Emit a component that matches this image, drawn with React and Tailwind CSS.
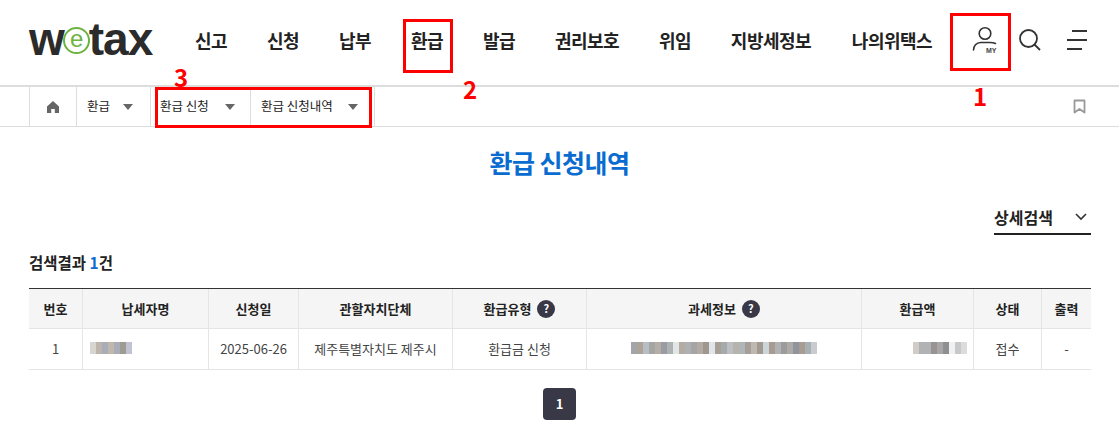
const menus = [
  { label: "신고", className: "w-[72px]" },
  { label: "신청", className: "w-[72px]" },
  { label: "납부", className: "w-[72px]" },
  { label: "환급", className: "w-[72px]" },
  { label: "발급", className: "w-[72px]" },
  { label: "권리보호", className: "w-[104px]" },
  { label: "위임", className: "w-[72px]" },
  { label: "지방세정보", className: "w-[120px]" },
  { label: "나의위택스", className: "w-[122px]" },
];

const gridCols = "grid-cols-[54px_126px_90px_154px_134px_275px_112px_68px_49px]";

// blurred personal data in the screenshot, one class per block
const nameCells = ["bg-[#d8d4d0]", "bg-[#bdb5ad]", "bg-[#a9adb8]", "bg-[#c0b7ad]", "bg-[#a9adb8]", "bg-[#9e9c92]", "bg-[#c1c4d0]"];
const infoCells = [
  "bg-[#a3a5a6]", "bg-[#ada39b]", "bg-[#b7bfc4]", "bg-[#a5a5a1]", "bg-[#b5aea8]", "bg-[#999ca3]", "bg-[#aeb2b2]", "bg-[#e3e6e6]",
  "bg-[#b5aba5]", "bg-[#afb0b2]", "bg-[#a5a5a5]", "bg-[#b3aba5]", "bg-[#a0988f]", "bg-[#dfe5e8]", "bg-[#a89f97]", "bg-[#a5aaad]",
  "bg-[#bcc0c2]", "bg-[#b8b2ac]", "bg-[#b0b5b8]", "bg-[#a69e98]", "bg-[#bfb8b2]", "bg-[#a09a92]", "bg-[#cdd5d8]", "bg-[#a69c94]",
  "bg-[#b0b2b4]", "bg-[#9c9c9c]", "bg-[#aeaaa8]", "bg-[#90949c]", "bg-[#a89c90]", "bg-[#a8b0b4]", "bg-[#c8ccce]",
];
const amountCells = ["bg-[#d2ccc6]", "bg-[#b0b2b4]", "bg-[#b0b2b4]", "bg-[#989494]", "bg-[#a8a6a6]", "bg-[#8f8f92]", "bg-[#f0f2f2]", "bg-[#c6c8ca]", "bg-[#dcdcdc]"];

function Mosaic({ cells }) {
  return (
    <span className="flex h-[12px] -translate-y-[1px]">
      {cells.map((c, i) => (
        <span key={i} className={`h-full w-[6px] ${c}`} />
      ))}
    </span>
  );
}

function Caret() {
  return <span className="h-0 w-0 border-x-[5px] border-t-[6px] border-x-transparent border-t-[#666]" />;
}

function Help() {
  return (
    <span className="ml-1.5 inline-flex h-[18px] w-[18px] items-center justify-center rounded-full bg-[#383846] text-[11px] font-bold text-white">?</span>
  );
}

function RedBox({ className }) {
  return <div className={`pointer-events-none absolute border-[3px] border-[#ff0000] ${className}`} />;
}

function RedNum({ className, children }) {
  return <div className={`absolute text-[24px] leading-none font-bold text-[#ff0000] ${className}`}>{children}</div>;
}

export default function App() {
  return (
    <div className="relative h-[440px] w-[1119px] overflow-hidden bg-white text-[#222]" style={{ fontFamily: '"Noto Sans CJK KR", "Noto Sans", sans-serif' }}>
      <header className="flex h-[87px] items-center border-b-2 border-[#ddd] pr-[32px] pl-[29px]">
        <div className="flex w-[130px] items-center pb-[8px] text-[46px] leading-none font-black tracking-[-1px] text-[#2b2b2b]" style={{ fontFamily: '"Liberation Sans", sans-serif' }}>
          <span>w</span>
          <span className="mx-[-1px] mt-[4px] flex h-[27px] w-[27px] shrink-0 items-center justify-center rounded-full border-2 border-[#6cb33f] pb-[3px] text-[24px] font-normal text-[#6cb33f]">e</span>
          <span>tax</span>
        </div>
        <nav className="ml-[16px] flex items-center pb-[5px]">
          {menus.map((m) => (
            <a key={m.label} className={`text-center text-[18px] font-bold tracking-[-0.5px] text-[#222] ${m.className}`}>{m.label}</a>
          ))}
        </nav>
        <div className="ml-auto flex items-center pb-[5px]">
          <svg width="28" height="29" viewBox="0 0 28 29" fill="none" stroke="#333" strokeWidth="1.6">
            <circle cx="13" cy="7.500" r="5.800" />
            <path d="M1.500 24c0-4 3-7.500 7-7.500h9.500c2.500 0 4.500.5 5.500 1" strokeLinecap="round" />
            <text x="14" y="27" fontSize="7" fontWeight="800" fill="#444" stroke="none" fontFamily="Liberation Sans, sans-serif">MY</text>
          </svg>
          <svg width="22" height="22" viewBox="0 0 22 22" fill="none" stroke="#333" strokeWidth="1.800" className="ml-[19px]">
            <circle cx="9.500" cy="9.500" r="8.500" />
            <path d="M15.500 15.500L21 21" />
          </svg>
          <div className="ml-[26px] flex w-[20px] flex-col gap-[7px]">
            <span className="h-[2px] w-[15px] self-end bg-[#333]" />
            <span className="h-[2px] w-[20px] bg-[#333]" />
            <span className="h-[2px] w-[15px] bg-[#333]" />
          </div>
        </div>
      </header>

      <div className="flex h-[40px] items-stretch border-b border-[#ddd] pr-[33px] pl-[29px] text-[12.500px] text-[#222]">
        <div className="flex w-[48px] items-center justify-center border-x border-[#ddd]">
          <svg width="14" height="14" viewBox="0 0 14 14" fill="#666"><path d="M7 1l6 5.500V13H8.800V9H5.200v4H1V6.500z" /></svg>
        </div>
        <div className="flex w-[74px] items-center justify-between border-r border-[#ddd] pr-[17px] pl-[10px]">환급<Caret /></div>
        <div className="flex w-[100px] items-center justify-between border-r border-[#ddd] pr-[15px] pl-[9px]">환급 신청<Caret /></div>
        <div className="flex w-[124px] items-center justify-between border-r border-[#ddd] pr-[16px] pl-[10px]">환급 신청내역<Caret /></div>
        <div className="ml-auto flex items-center">
          <svg width="13" height="15" viewBox="0 0 13 15" fill="none" stroke="#999" strokeWidth="1.800"><path d="M1.500 1.500h10V13.500L6.500 10 1.500 13.500z" strokeLinejoin="round" /></svg>
        </div>
      </div>

      <h1 className="mt-[17px] text-center text-[25px] leading-[36px] font-bold tracking-[-0.5px] text-[#0a6cd0]">환급 신청내역</h1>

      <div className="mt-[21px] flex justify-end pr-[28px]">
        <div className="flex h-[34px] w-[97px] items-center justify-between border-b-2 border-[#222] text-[16px] font-bold">
          상세검색
          <svg width="12" height="8" viewBox="0 0 12 8" fill="none" stroke="#333" strokeWidth="1.600" className="mr-[4px]"><path d="M1 1l5 5 5-5" /></svg>
        </div>
      </div>

      <p className="mt-[15px] pl-[29px] text-[15.500px] leading-[24px] font-bold">검색결과 <span className="text-[#0a6cd0]">1</span>건</p>

      <div className="mt-[14px] mr-[28px] ml-[29px] border-t border-[#333] text-[13px]">
        <div className={`grid h-[40px] border-b border-[#e5e5e5] bg-[#f5f5f5] font-bold ${gridCols}`}>
          {["번호", "납세자명", "신청일", "관할자치단체"].map((t) => (
            <div key={t} className="flex items-center justify-center border-r border-[#e5e5e5]">{t}</div>
          ))}
          <div className="flex items-center justify-center border-r border-[#e5e5e5]">환급유형<Help /></div>
          <div className="flex items-center justify-center border-r border-[#e5e5e5]">과세정보<Help /></div>
          <div className="flex items-center justify-center border-r border-[#e5e5e5]">환급액</div>
          <div className="flex items-center justify-center border-r border-[#e5e5e5]">상태</div>
          <div className="flex items-center justify-center">출력</div>
        </div>
        <div className={`grid h-[41px] border-b border-[#e5e5e5] text-[#444] ${gridCols}`}>
          <div className="flex items-center justify-center border-r border-[#e5e5e5]">1</div>
          <div className="flex items-center border-r border-[#e5e5e5] pl-[7px]"><Mosaic cells={nameCells} /></div>
          <div className="flex items-center justify-center border-r border-[#e5e5e5]">2025-06-26</div>
          <div className="flex items-center justify-center border-r border-[#e5e5e5]">제주특별자치도 제주시</div>
          <div className="flex items-center justify-center border-r border-[#e5e5e5]">환급금 신청</div>
          <div className="flex items-center justify-center border-r border-[#e5e5e5]"><Mosaic cells={infoCells} /></div>
          <div className="flex items-center justify-end border-r border-[#e5e5e5] pr-[6px]"><Mosaic cells={amountCells} /></div>
          <div className="flex items-center justify-center border-r border-[#e5e5e5]">접수</div>
          <div className="flex items-center justify-center">-</div>
        </div>
      </div>

      <div className="mt-[18px] flex justify-center">
        <span className="flex h-[32px] w-[33px] items-center justify-center rounded-[4px] bg-[#383846] text-[13px] font-bold text-white">1</span>
      </div>

      <RedBox className="top-[13px] left-[950px] h-[58px] w-[61px]" />
      <RedBox className="top-[19px] left-[403px] h-[54px] w-[50px]" />
      <RedBox className="top-[87px] left-[155px] h-[41px] w-[217px]" />
      <RedNum className="top-[84px] left-[973px]">1</RedNum>
      <RedNum className="top-[77px] left-[463px]">2</RedNum>
      <RedNum className="top-[65px] left-[174px]">3</RedNum>
    </div>
  );
}
